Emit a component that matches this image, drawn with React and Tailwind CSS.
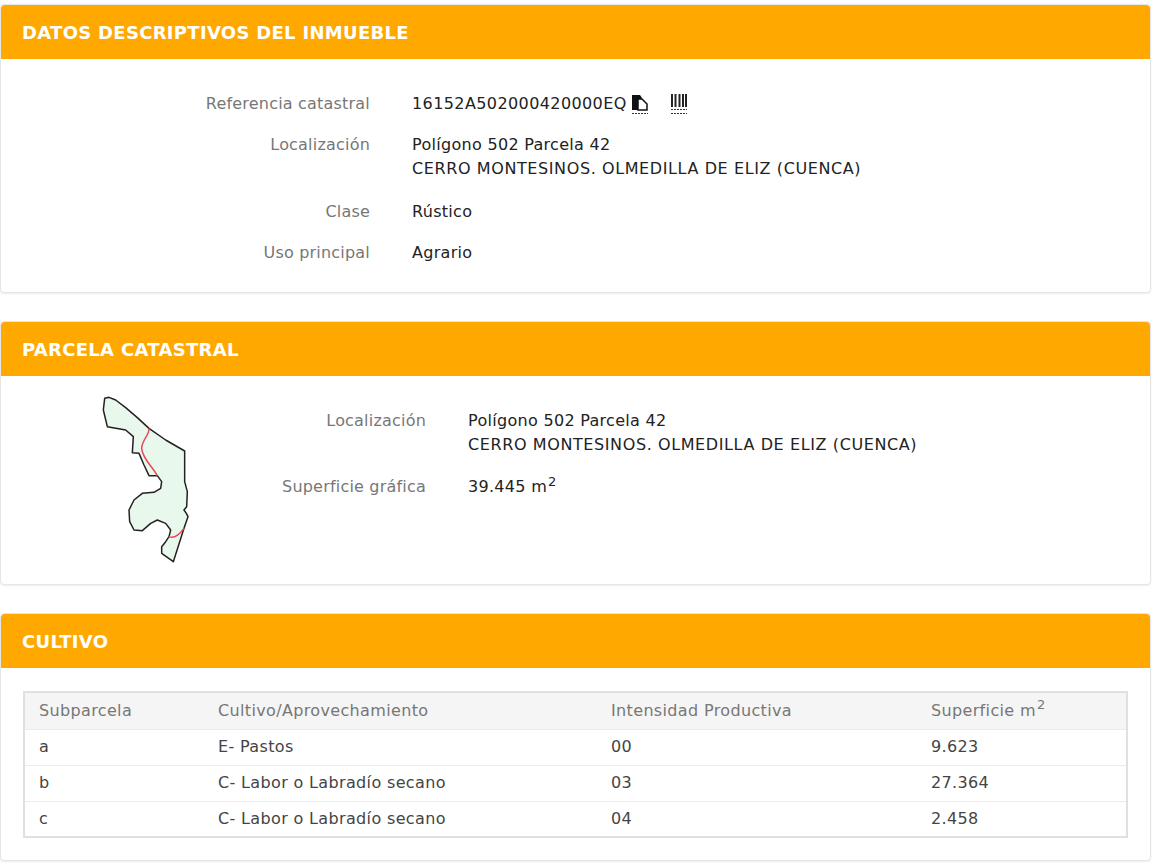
const outline = '47,40 60,37 80,45 110,68 145,98 180,130 230,165 287,198 287,290 295,320 293,365 285,375 292,385 297,395 285,430 253,530 218,505 218,485 230,470 240,455 245,435 230,415 205,405 185,415 160,437 135,435 122,410 120,375 135,345 160,325 195,322 215,310 218,290 205,272 180,272 165,240 150,205 130,203 133,155 110,135 55,125 43,75'

function ParcelMap() {
  return (
    <svg width="110" height="185" viewBox="0 0 330 555" className="shrink-0">
      <polygon points={outline} fill="#e9f8ec" stroke="#222" strokeWidth="4.5" strokeLinejoin="round" />
      <path d="M180 130 C182 150 158 165 158 190 C160 220 190 245 205 272" fill="none" stroke="#e8475a" strokeWidth="4.5" />
      <path d="M240 455 C255 462 270 450 285 430" fill="none" stroke="#e8475a" strokeWidth="4.5" />
    </svg>
  )
}

function CopyIcon() {
  return (
    <svg width="18" height="20" viewBox="0 0 18 20" className="shrink-0">
      <path d="M1 1h8l2 3v12H1z" fill="#111" />
      <path d="M7 5h4l5 5v6H7z" fill="#fff" stroke="#111" strokeWidth="1.5" />
      <path d="M1 19.5h16" stroke="#333" strokeWidth="1.2" strokeDasharray="2 1" />
    </svg>
  )
}

function BarcodeIcon() {
  return (
    <svg width="18" height="20" viewBox="0 0 18 20" className="shrink-0">
      <path d="M2 0v13M5.5 0v13M9.5 0v13M13 0v13M16 0v13" stroke="#222" strokeWidth="2" />
      <path d="M1 15.5h16M1 19.5h16" stroke="#333" strokeWidth="1.2" strokeDasharray="2 1" />
    </svg>
  )
}

function Card({ title, children }) {
  return (
    <section className="bg-white border border-[#e6e6e6] rounded shadow-[0_1px_2px_rgba(0,0,0,0.08)]">
      <h2 className="h-[54px] flex items-center pl-[21px] pr-5 bg-[#ffa800] rounded-t text-white font-bold text-[18px] tracking-[0.3px]">
        {title}
      </h2>
      {children}
    </section>
  )
}

function Field({ label, labelWidth, children }) {
  return (
    <div className="flex leading-6">
      <div className="shrink-0 text-right text-[#777] tracking-[0.2px]" style={{ width: labelWidth }}>{label}</div>
      <div className="ml-[42px] text-[#222] tracking-[0.3px]">{children}</div>
    </div>
  )
}

function Address() {
  return (
    <>
      Polígono 502 Parcela 42<br />
      <span className="tracking-[0.6px]">CERRO MONTESINOS. OLMEDILLA DE ELIZ (CUENCA)</span>
    </>
  )
}

function Squared() {
  return <sup className="text-[13px] ml-px">2</sup>
}

const rows = [
  ['a', 'E- Pastos', '00', '9.623'],
  ['b', 'C- Labor o Labradío secano', '03', '27.364'],
  ['c', 'C- Labor o Labradío secano', '04', '2.458'],
]

export default function App() {
  return (
    <div className="w-[1154px] min-h-[866px] bg-white pt-[4px] pr-[3px] flex flex-col gap-[28px] text-[16px] font-['DejaVu_Sans',Verdana,sans-serif]">
      <Card title="DATOS DESCRIPTIVOS DEL INMUEBLE">
        <div className="pt-[33px] pb-[27px] flex flex-col gap-[17px]">
          <Field label="Referencia catastral" labelWidth={369}>
            <div className="flex items-center">
              <span className="tracking-[0.4px]">16152A502000420000EQ</span>
              <span className="ml-[4px]"><CopyIcon /></span>
              <span className="ml-[21px]"><BarcodeIcon /></span>
            </div>
          </Field>
          <div className="mb-[2px]">
            <Field label="Localización" labelWidth={369}><Address /></Field>
          </div>
          <Field label="Clase" labelWidth={369}>Rústico</Field>
          <Field label="Uso principal" labelWidth={369}>Agrario</Field>
        </div>
      </Card>

      <Card title="PARCELA CATASTRAL">
        <div className="flex h-[208px] pl-[88px] pt-[9px]">
          <ParcelMap />
          <div className="pt-[24px] flex flex-col gap-[18px]">
            <Field label="Localización" labelWidth={227}><Address /></Field>
            <Field label="Superficie gráfica" labelWidth={227}>39.445 m<Squared /></Field>
          </div>
        </div>
      </Card>

      <Card title="CULTIVO">
        <div className="pt-[23px] pb-[22px] px-[22px]">
          <table className="w-[1105px] table-fixed border-2 border-[#e0e0e0] border-collapse text-[#444] tracking-[0.35px]">
            <thead>
              <tr className="h-[37px] bg-[#f5f5f5] text-[#777] text-left">
                <th className="w-[194px] pl-[14px] font-normal">Subparcela</th>
                <th className="w-[393px] font-normal">Cultivo/Aprovechamiento</th>
                <th className="w-[320px] font-normal">Intensidad Productiva</th>
                <th className="font-normal">Superficie m<Squared /></th>
              </tr>
            </thead>
            <tbody>
              {rows.map((r) => (
                <tr key={r[0]} className="h-[36px] border-t border-[#ececec]">
                  <td className="pl-[14px]">{r[0]}</td>
                  <td>{r[1]}</td>
                  <td>{r[2]}</td>
                  <td>{r[3]}</td>
                </tr>
              ))}
            </tbody>
          </table>
        </div>
      </Card>
    </div>
  )
}
